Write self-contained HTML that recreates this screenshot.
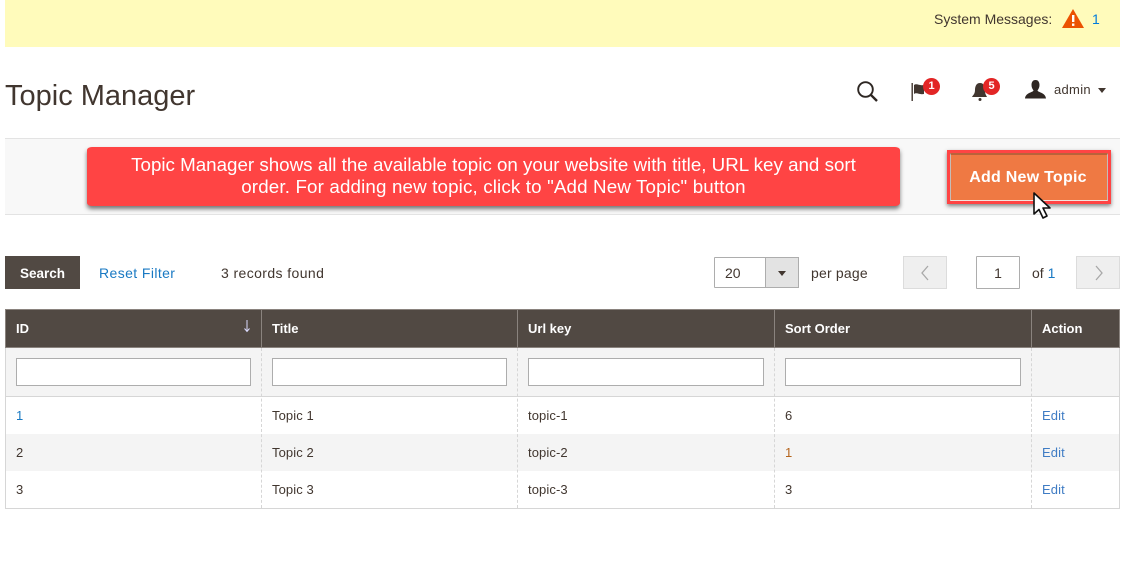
<!DOCTYPE html>
<html><head><meta charset="utf-8">
<style>
html,body{margin:0;padding:0;background:#fff}
body{width:1121px;height:565px;position:relative;overflow:hidden;font-family:"Liberation Sans",sans-serif;color:#41362f;font-size:13px}
.a{position:absolute;white-space:nowrap}
.box{position:absolute;box-sizing:border-box}
.th{position:absolute;top:321px;font-weight:bold;color:#fff;font-size:13px;line-height:16px}
.t{position:absolute;font-size:13px;line-height:16px;white-space:nowrap;letter-spacing:.1px}
.in{position:absolute;top:358px;height:28px;box-sizing:border-box;border:1px solid #adadad;background:#fff}
.v{position:absolute;width:0;border-left:1px dashed #d6d6d6}
.badge{position:absolute;width:17px;height:17px;border-radius:50%;background:#e22626;color:#fff;font-weight:bold;font-size:11px;line-height:17px;text-align:center}
</style></head><body>
<div class="box" style="left:5px;top:0;width:1115px;height:47px;background:#fffbbb"></div>
<div class="a" style="left:934px;top:10px;font-size:14px;line-height:18px;color:#41362f">System Messages:</div>
<svg class="a" style="left:1062px;top:9px" width="22" height="20" viewBox="0 0 22 20"><path d="M11 0L22 19H0Z" fill="#eb5202"/><rect x="10" y="6" width="2.4" height="7" fill="#fff"/><rect x="10" y="14.500" width="2.4" height="2.4" fill="#fff"/></svg>
<div class="a" style="left:1092px;top:10px;font-size:14px;line-height:18px;color:#007bdb">1</div>

<div class="a" style="left:5px;top:78px;font-size:29px;line-height:36px;color:#41362f;letter-spacing:0">Topic Manager</div>

<svg class="a" style="left:856px;top:80px" width="23" height="23" viewBox="0 0 23 23"><circle cx="9.500" cy="9.500" r="7.300" fill="none" stroke="#2d2622" stroke-width="1.900"/><path d="M14.800 14.800L21 21" stroke="#2d2622" stroke-width="2.400"/></svg>
<svg class="a" style="left:910px;top:82px" width="20" height="20" viewBox="0 0 20 20"><rect x="1.500" y="1" width="1.400" height="18" fill="#41362f"/><path d="M4 3C7 1 9 4 14 3V12C9 13 7 10 4 12Z" fill="#41362f"/></svg>
<div class="badge" style="left:923px;top:78px">1</div>
<svg class="a" style="left:971px;top:82px" width="18" height="20" viewBox="0 0 18 20"><path d="M9 1C5 1 4 5 4 8C4 12 2 13 1 15H16C15 13 14 12 14 8C14 5 13 1 9 1Z" fill="#41362f"/><circle cx="9" cy="17.500" r="1.500" fill="#41362f"/></svg>
<div class="badge" style="left:983px;top:78px">5</div>
<svg class="a" style="left:1025px;top:80px" width="21" height="19" viewBox="0 0 21 19"><path d="M10.500 0C7.500 0 6.500 2.500 6.500 5C6.500 7.500 7.500 9 8.500 10.500C8 12.500 .5 12.500 0 18.500H21C20.500 12.500 13 12.500 12.500 10.500C13.500 9 14.500 7.500 14.500 5C14.500 2.500 13.500 0 10.500 0Z" fill="#2f2723"/></svg>
<div class="a" style="left:1054px;top:82px;font-size:13px;line-height:16px;color:#41362f;letter-spacing:.3px">admin</div>
<div class="a" style="left:1098px;top:88px;width:0;height:0;border-left:4px solid transparent;border-right:4px solid transparent;border-top:5px solid #41362f"></div>

<div class="box" style="left:5px;top:138px;width:1115px;height:77px;background:#f8f8f8;border-top:1px solid #e3e3e3;border-bottom:1px solid #e3e3e3"></div>
<div class="box" style="left:87px;top:147px;width:813px;height:59px;background:#ff4444;border-radius:5px/3px;box-shadow:0 3px 4px rgba(50,50,50,.65);color:#fff;font-size:18.75px;line-height:22px;text-align:center;padding:7px 20px 0 20px">Topic Manager shows all the available topic on your website with title, URL key and sort<br><span style="letter-spacing:.15px">order. For adding new topic, click to "Add New Topic" button</span></div>
<div class="box" style="left:947px;top:150px;width:164px;height:54px;border:3px solid #ff4444;box-shadow:0 2px 4px rgba(50,50,50,.6)"></div>
<div class="box" style="left:950px;top:153px;width:158px;height:48px;background:#ef7943;border:1px solid #c4bdb8;border-top:2px solid #b9623a;border-bottom:1px solid #f2e5de;color:#fff;font-weight:bold;font-size:16px;line-height:45px;text-align:center;letter-spacing:.25px;padding-right:2px">Add New Topic</div>
<svg class="a" style="left:1032px;top:191px" width="20" height="29" viewBox="0 0 20 29"><path d="M2 2V23L7 18.500L11 27L15 25L11 17H18Z" fill="#fff" stroke="#111" stroke-width="1.600" stroke-linejoin="round"/></svg>

<div class="box" style="left:5px;top:256px;width:75px;height:33px;background:#514943;color:#fff;font-weight:bold;font-size:13.500px;line-height:35px;text-align:center">Search</div>
<div class="a" style="left:99px;top:264px;font-size:14px;line-height:18px;color:#1979c3;letter-spacing:.4px">Reset Filter</div>
<div class="a" style="left:221px;top:264px;font-size:14px;line-height:18px;color:#41362f;letter-spacing:.4px">3 records found</div>

<div class="box" style="left:714px;top:257px;width:85px;height:31px;border:1px solid #adadad;background:#fff;border-radius:1px"></div>
<div class="box" style="left:765px;top:257px;width:34px;height:31px;border:1px solid #adadad;background:#e3e3e3"></div>
<div class="a" style="left:725px;top:264px;font-size:14px;line-height:18px;color:#41362f">20</div>
<div class="a" style="left:778px;top:271px;width:0;height:0;border-left:4px solid transparent;border-right:4px solid transparent;border-top:5px solid #41362f"></div>
<div class="a" style="left:811px;top:264px;font-size:14px;line-height:18px;color:#41362f;letter-spacing:.2px">per page</div>
<div class="box" style="left:903px;top:256px;width:44px;height:33px;background:#efefef;border:1px solid #dcdcdc"></div>
<svg class="a" style="left:919px;top:265px" width="12" height="16" viewBox="0 0 12 16"><path d="M9 1L3 8L9 15" fill="none" stroke="#a8a8a8" stroke-width="1.300"/></svg>
<div class="box" style="left:976px;top:256px;width:44px;height:33px;background:#fff;border:1px solid #adadad;border-radius:1px;font-size:14px;line-height:33px;text-align:center;color:#41362f">1</div>
<div class="a" style="left:1032px;top:264px;font-size:14px;line-height:18px;color:#41362f">of <span style="color:#1979c3">1</span></div>
<div class="box" style="left:1076px;top:256px;width:44px;height:33px;background:#efefef;border:1px solid #dcdcdc"></div>
<svg class="a" style="left:1093px;top:265px" width="12" height="16" viewBox="0 0 12 16"><path d="M3 1L9 8L3 15" fill="none" stroke="#a8a8a8" stroke-width="1.300"/></svg>

<div class="box" style="left:5px;top:309px;width:1115px;height:39px;background:#514943;border:1px solid #8a837e"></div>
<div class="box" style="left:261px;top:310px;width:1px;height:37px;background:#8a837e"></div>
<div class="box" style="left:517px;top:310px;width:1px;height:37px;background:#8a837e"></div>
<div class="box" style="left:774px;top:310px;width:1px;height:37px;background:#8a837e"></div>
<div class="box" style="left:1031px;top:310px;width:1px;height:37px;background:#8a837e"></div>
<div class="th" style="left:16px">ID</div>
<svg class="a" style="left:243px;top:319px" width="8" height="14" viewBox="0 0 8 14"><path d="M4 1V12M1.500 9.500L4 12.500L6.500 9.500" fill="none" stroke="#dcdcff" stroke-width="1"/></svg>
<div class="th" style="left:272px">Title</div>
<div class="th" style="left:528px">Url key</div>
<div class="th" style="left:785px">Sort Order</div>
<div class="th" style="left:1042px">Action</div>

<div class="box" style="left:5px;top:348px;width:1115px;height:161px;border:1px solid #d6d6d6;border-top:0;background:#fff"></div>
<div class="box" style="left:6px;top:348px;width:1113px;height:48px;background:#f4f4f4"></div>
<div class="box" style="left:6px;top:396px;width:1113px;height:1px;background:#d6d6d6"></div>
<div class="box" style="left:6px;top:434px;width:1113px;height:37px;background:#f4f4f4"></div>
<div class="in" style="left:16px;width:235px"></div>
<div class="in" style="left:272px;width:235px"></div>
<div class="in" style="left:528px;width:236px"></div>
<div class="in" style="left:785px;width:236px"></div>
<div class="v" style="left:261px;top:348px;height:160px"></div>
<div class="v" style="left:517px;top:348px;height:160px"></div>
<div class="v" style="left:774px;top:348px;height:160px"></div>
<div class="v" style="left:1031px;top:348px;height:160px"></div>

<div class="t" style="left:16px;top:408px;color:#1979c3">1</div>
<div class="t" style="left:272px;top:408px">Topic 1</div>
<div class="t" style="left:528px;top:408px">topic-1</div>
<div class="t" style="left:785px;top:408px">6</div>
<div class="t" style="left:1042px;top:408px;color:#3f7cc4">Edit</div>
<div class="t" style="left:16px;top:445px">2</div>
<div class="t" style="left:272px;top:445px">Topic 2</div>
<div class="t" style="left:528px;top:445px">topic-2</div>
<div class="t" style="left:785px;top:445px;color:#b5651d">1</div>
<div class="t" style="left:1042px;top:445px;color:#3f7cc4">Edit</div>
<div class="t" style="left:16px;top:482px">3</div>
<div class="t" style="left:272px;top:482px">Topic 3</div>
<div class="t" style="left:528px;top:482px">topic-3</div>
<div class="t" style="left:785px;top:482px">3</div>
<div class="t" style="left:1042px;top:482px;color:#3f7cc4">Edit</div>
</body></html>
